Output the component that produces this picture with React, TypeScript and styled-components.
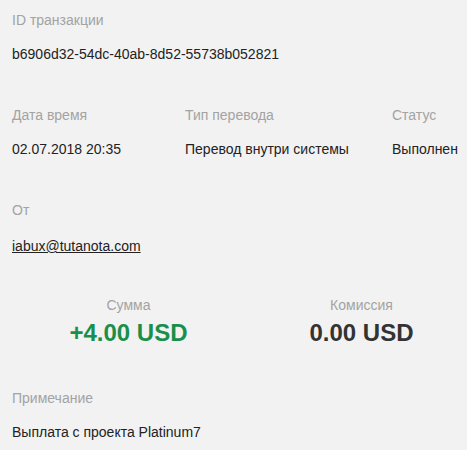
import styled, { createGlobalStyle } from 'styled-components'

const GlobalStyle = createGlobalStyle`
  html, body {
    margin: 0;
    padding: 0;
    background: #f2f2f2;
  }
  body {
    font-family: 'Liberation Sans', Arial, sans-serif;
    font-size: 14px;
    color: #222;
  }
`

const Page = styled.div`
  padding: 10px 0 0 12px;
  width: 467px;
  box-sizing: border-box;
`

const Section = styled.div`
  margin-bottom: 41px;
  &:last-child {
    margin-bottom: 0;
  }
`

const Row = styled.div`
  display: grid;
  grid-template-columns: 173px 207px auto;
  margin-bottom: 41px;
`

const Label = styled.div`
  color: #a3a3a3;
  line-height: 20px;
  margin-bottom: 14px;
`

const Value = styled.div`
  line-height: 20px;
  white-space: nowrap;
`

const EmailValue = styled(Value)`
  padding-top: 2px;
  margin-bottom: -2px;
`

const Email = styled.a`
  color: #222;
  text-decoration: underline;
`

const Amounts = styled.div`
  display: grid;
  grid-template-columns: 233px 233px;
  margin-bottom: 41px;
`

const AmountCol = styled.div`
  text-align: center;
`

const AmountLabel = styled(Label)`
  margin-bottom: 4px;
`

const Amount = styled.div<{ $positive?: boolean }>`
  font-size: 24px;
  font-weight: bold;
  line-height: 28px;
  color: ${p => (p.$positive ? '#1a8f4a' : '#333')};
`

const App = () => {
  return (
    <>
      <GlobalStyle />
      <Page>
        <Section>
          <Label>ID транзакции</Label>
          <Value>b6906d32-54dc-40ab-8d52-55738b052821</Value>
        </Section>
        <Row>
          <div>
            <Label>Дата время</Label>
            <Value>02.07.2018 20:35</Value>
          </div>
          <div>
            <Label>Тип перевода</Label>
            <Value>Перевод внутри системы</Value>
          </div>
          <div>
            <Label>Статус</Label>
            <Value>Выполнен</Value>
          </div>
        </Row>
        <Section>
          <Label>От</Label>
          <EmailValue>
            <Email href="#">iabux@tutanota.com</Email>
          </EmailValue>
        </Section>
        <Amounts>
          <AmountCol>
            <AmountLabel>Сумма</AmountLabel>
            <Amount $positive>+4.00 USD</Amount>
          </AmountCol>
          <AmountCol>
            <AmountLabel>Комиссия</AmountLabel>
            <Amount>0.00 USD</Amount>
          </AmountCol>
        </Amounts>
        <Section>
          <Label>Примечание</Label>
          <Value>Выплата с проекта Platinum7</Value>
        </Section>
      </Page>
    </>
  )
}

export default App
